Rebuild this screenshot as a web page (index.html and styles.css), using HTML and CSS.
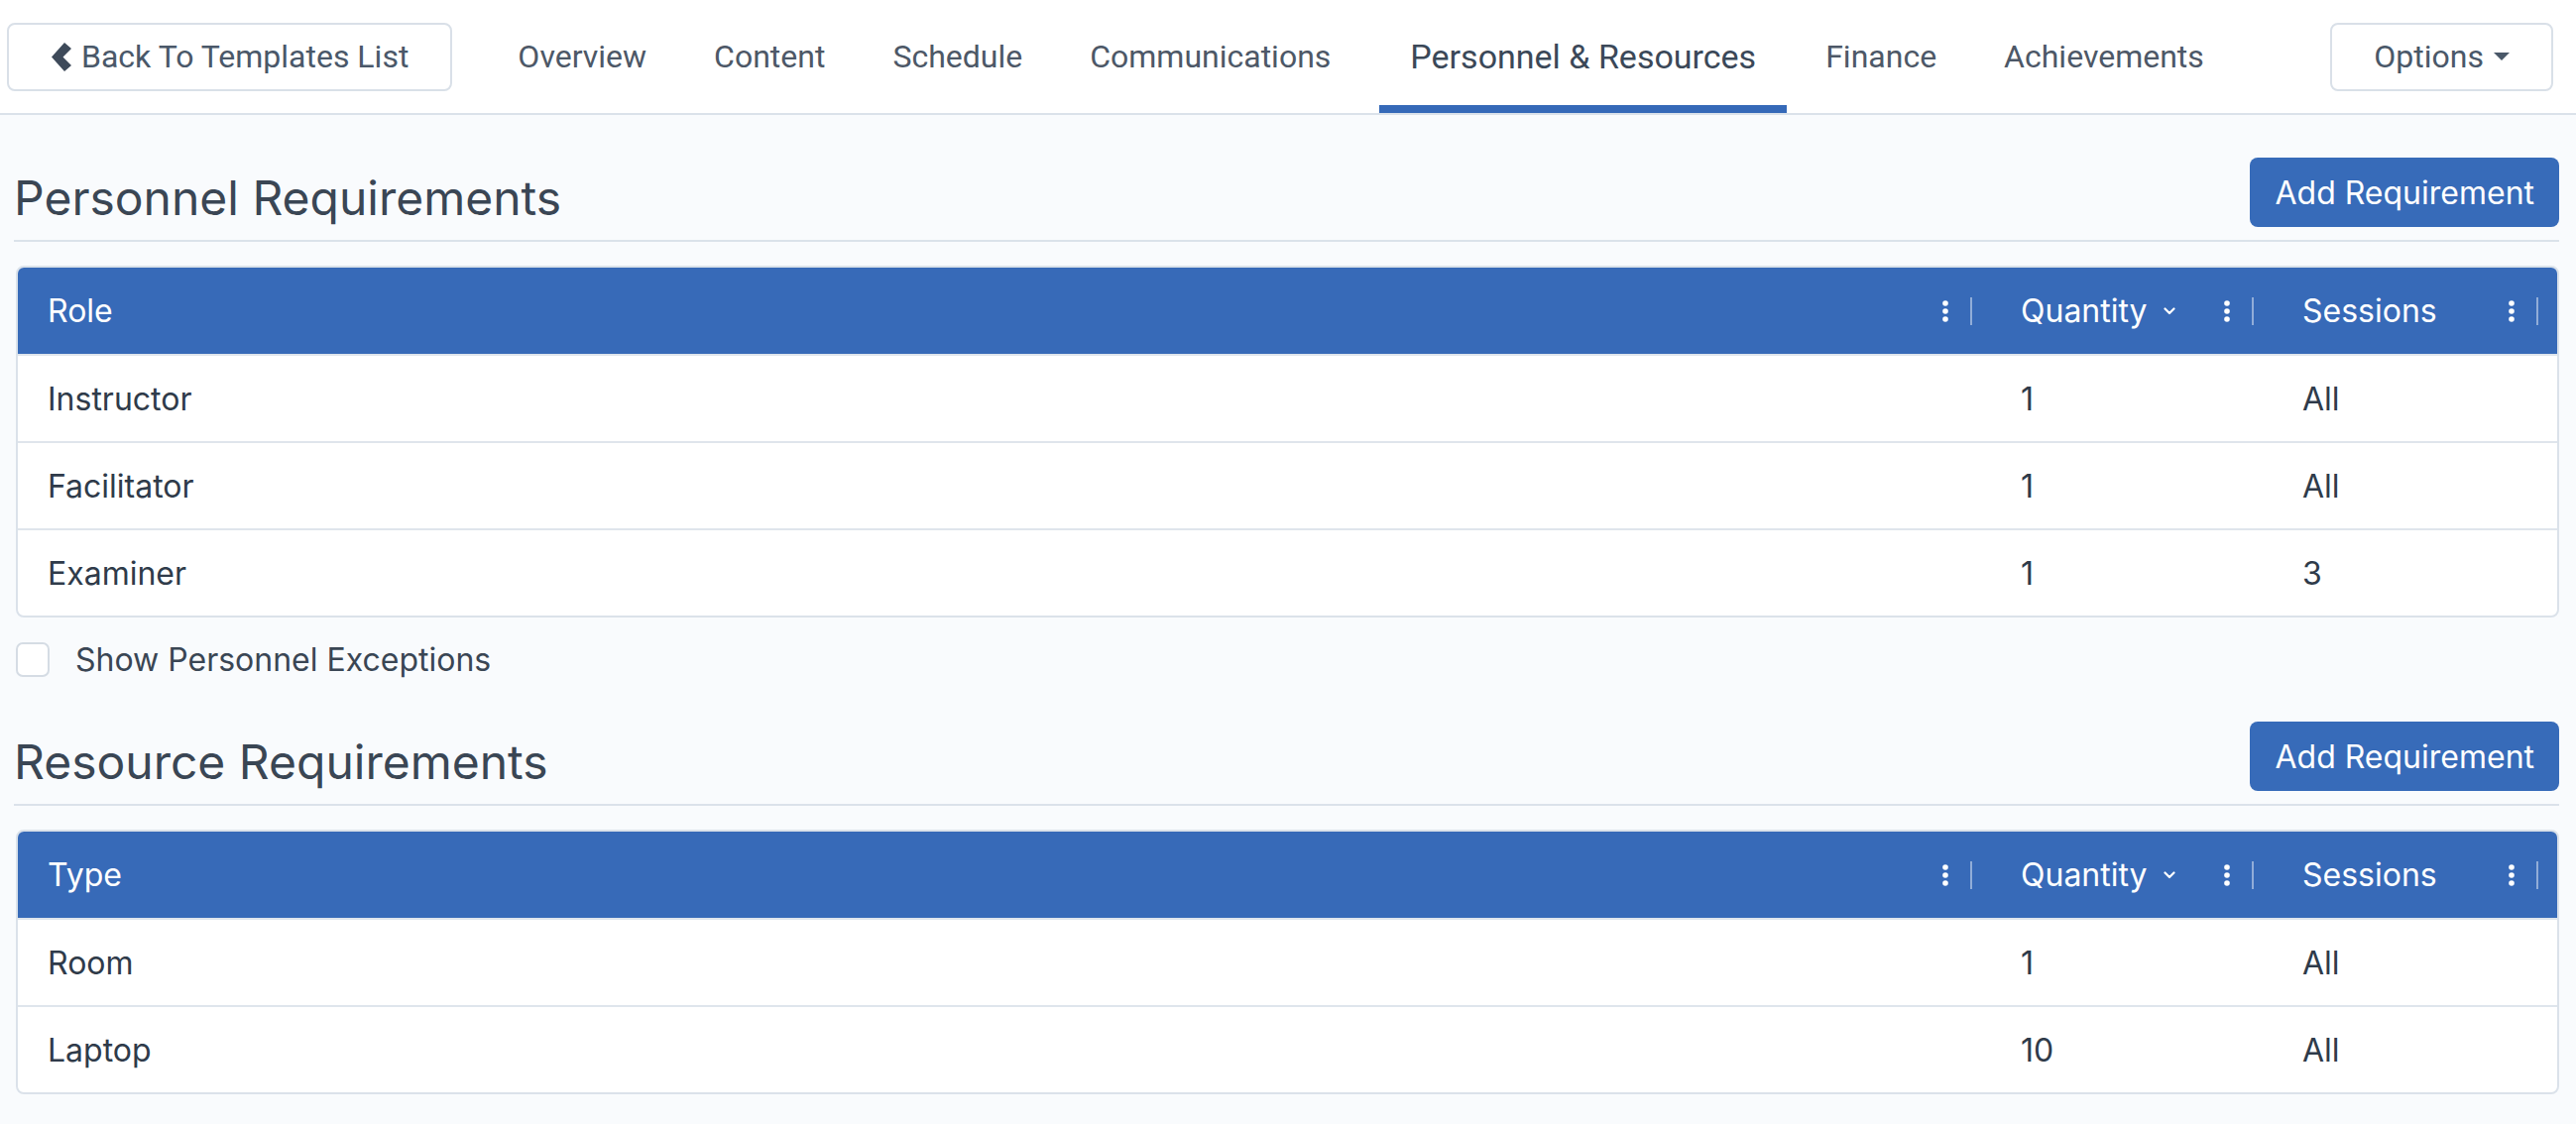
FILE: index.html
```html
<!DOCTYPE html>
<html lang="en">
<head>
<meta charset="utf-8">
<title>Personnel &amp; Resources</title>
<link rel="stylesheet" href="styles.css">
</head>
<body>
<nav class="topnav">
  <button class="nav-btn back-btn">
    <svg class="chev-left" viewBox="0 0 20 29" width="20" height="29"><path d="M13 0 L20 6 L11.5 14.5 L20 23 L13 29 L0 14.5 Z" fill="currentColor"/></svg>
    <span>Back To Templates List</span>
  </button>
  <ul class="tabs">
    <li class="tab">Overview</li>
    <li class="tab">Content</li>
    <li class="tab">Schedule</li>
    <li class="tab">Communications</li>
    <li class="tab active">Personnel &amp; Resources</li>
    <li class="tab">Finance</li>
    <li class="tab">Achievements</li>
  </ul>
  <button class="nav-btn options-btn">
    <span>Options</span>
    <svg class="caret" viewBox="0 0 16 8" width="16" height="8"><path d="M0 0 H16 L8 8 Z" fill="currentColor"/></svg>
  </button>
</nav>

<main class="content">
  <section class="req-section">
    <div class="section-head">
      <h2 class="section-title">Personnel Requirements</h2>
      <button class="btn-primary">Add Requirement</button>
    </div>
    <div class="grid-table">
      <div class="grid-row head">
        <div class="th"><span class="th-label">Role</span><span class="th-fill"></span><svg class="dots" viewBox="0 0 6 22" width="6" height="22"><circle cx="3" cy="3" r="2.8"/><circle cx="3" cy="11" r="2.8"/><circle cx="3" cy="19" r="2.8"/></svg><i class="th-sep"></i></div>
        <div class="th"><span class="th-label">Quantity</span><svg class="sort" viewBox="0 0 12 8" width="12" height="8"><path d="M1.5 1.5 L6 6 L10.5 1.5" fill="none" stroke="currentColor" stroke-width="2.2" stroke-linecap="round" stroke-linejoin="round"/></svg><span class="th-fill"></span><svg class="dots" viewBox="0 0 6 22" width="6" height="22"><circle cx="3" cy="3" r="2.8"/><circle cx="3" cy="11" r="2.8"/><circle cx="3" cy="19" r="2.8"/></svg><i class="th-sep"></i></div>
        <div class="th"><span class="th-label">Sessions</span><span class="th-fill"></span><svg class="dots" viewBox="0 0 6 22" width="6" height="22"><circle cx="3" cy="3" r="2.8"/><circle cx="3" cy="11" r="2.8"/><circle cx="3" cy="19" r="2.8"/></svg><i class="th-sep"></i></div>
      </div>
      <div class="grid-row"><div class="td">Instructor</div><div class="td">1</div><div class="td">All</div></div>
      <div class="grid-row"><div class="td">Facilitator</div><div class="td">1</div><div class="td">All</div></div>
      <div class="grid-row"><div class="td">Examiner</div><div class="td">1</div><div class="td">3</div></div>
    </div>
    <label class="check-row">
      <span class="checkbox"></span>
      <span>Show Personnel Exceptions</span>
    </label>
  </section>

  <section class="req-section">
    <div class="section-head">
      <h2 class="section-title">Resource Requirements</h2>
      <button class="btn-primary">Add Requirement</button>
    </div>
    <div class="grid-table">
      <div class="grid-row head">
        <div class="th"><span class="th-label">Type</span><span class="th-fill"></span><svg class="dots" viewBox="0 0 6 22" width="6" height="22"><circle cx="3" cy="3" r="2.8"/><circle cx="3" cy="11" r="2.8"/><circle cx="3" cy="19" r="2.8"/></svg><i class="th-sep"></i></div>
        <div class="th"><span class="th-label">Quantity</span><svg class="sort" viewBox="0 0 12 8" width="12" height="8"><path d="M1.5 1.5 L6 6 L10.5 1.5" fill="none" stroke="currentColor" stroke-width="2.2" stroke-linecap="round" stroke-linejoin="round"/></svg><span class="th-fill"></span><svg class="dots" viewBox="0 0 6 22" width="6" height="22"><circle cx="3" cy="3" r="2.8"/><circle cx="3" cy="11" r="2.8"/><circle cx="3" cy="19" r="2.8"/></svg><i class="th-sep"></i></div>
        <div class="th"><span class="th-label">Sessions</span><span class="th-fill"></span><svg class="dots" viewBox="0 0 6 22" width="6" height="22"><circle cx="3" cy="3" r="2.8"/><circle cx="3" cy="11" r="2.8"/><circle cx="3" cy="19" r="2.8"/></svg><i class="th-sep"></i></div>
      </div>
      <div class="grid-row"><div class="td">Room</div><div class="td">1</div><div class="td">All</div></div>
      <div class="grid-row"><div class="td">Laptop</div><div class="td">10</div><div class="td">All</div></div>
    </div>
  </section>
</main>
</body>
</html>
```

FILE: styles.css
```css
* { box-sizing: border-box; }

html, body {
  margin: 0;
  padding: 0;
}

body {
  background: #f9fbfd;
  font-family: "Inter", "Noto Sans", sans-serif;
  color: #2f3b4a;
}

/* ---------- top navigation ---------- */
.topnav {
  display: flex;
  align-items: center;
  height: 116px;
  padding: 0 23px 0 7px;
  background: #ffffff;
  border-bottom: 2px solid #dbe2ea;
}

.nav-btn {
  display: flex;
  align-items: center;
  height: 69px;
  background: #ffffff;
  border: 2px solid #d9e0e8;
  border-radius: 8px;
  font-family: "Roboto", "Liberation Sans", sans-serif;
  font-size: 32px;
  color: #4a5869;
  cursor: pointer;
}

.back-btn {
  gap: 10px;
  padding: 0 42px 0 43px;
}

.chev-left { color: #3e4a5a; }

.options-btn {
  gap: 10px;
  margin-left: auto;
  padding: 0 42px 0 42px;
}

.caret { color: #4a5869; }

.tabs {
  display: flex;
  align-self: stretch;
  margin: 0 0 0 32px;
  padding: 0;
  list-style: none;
}

.tab {
  display: flex;
  align-items: center;
  margin: 0 5px;
  padding: 8px 29px 0;
  border-bottom: 8px solid transparent;
  font-family: "Roboto", "Liberation Sans", sans-serif;
  font-size: 32px;
  color: #4d5867;
  cursor: pointer;
}

.tab.active {
  margin-left: 15px;
  padding: 8px 31px 0;
  font-size: 34px;
  color: #3b4858;
  border-bottom-color: #3569b8;
}

/* ---------- page content ---------- */
.content {
  padding: 43px 17px 0 14px;
}

.section-head {
  display: flex;
  align-items: flex-end;
  justify-content: space-between;
  padding-bottom: 13px;
  border-bottom: 2px solid #dbe2ea;
}

.section-title {
  margin: 0 0 1px 0;
  font-size: 48px;
  line-height: 56px;
  font-weight: 400;
  color: #3a4654;
}

.btn-primary {
  height: 70px;
  padding: 0 25px;
  background: #376bb9;
  border: 0;
  border-radius: 8px;
  color: #ffffff;
  font-family: "Inter", "Noto Sans", sans-serif;
  font-size: 32px;
  cursor: pointer;
}

/* ---------- data grid ---------- */
.grid-table {
  margin: 24px 0 0 2px;
  background: #ffffff;
  border: 2px solid #dbe2ea;
  border-radius: 8px;
  overflow: hidden;
}

.grid-row {
  display: grid;
  grid-template-columns: 1fr 284px 287px;
  height: 88px;
  border-top: 2px solid #dfe5ec;
}

.grid-row.head {
  height: 87px;
  border-top: 0;
  background: #376ab8;
  color: #ffffff;
}

.th {
  display: flex;
  align-items: center;
  padding: 0 19px 0 30px;
  font-size: 32px;
}

.th-fill { flex: 1; }

.sort {
  margin-left: 16px;
  color: #ffffff;
}

.dots {
  fill: #ffffff;
}

.th-sep {
  width: 2px;
  height: 28px;
  margin-left: 22px;
  background: rgba(255, 255, 255, 0.45);
}

.td {
  display: flex;
  align-items: center;
  padding: 0 30px;
  font-size: 32px;
  color: #2f3b4a;
}

/* ---------- checkbox ---------- */
.check-row {
  display: flex;
  align-items: center;
  gap: 26px;
  height: 35px;
  margin: 25px 0 45px 2px;
  font-size: 32px;
  color: #3a4654;
}

.checkbox {
  width: 34px;
  height: 35px;
  background: #ffffff;
  border: 2px solid #d5dce4;
  border-radius: 7px;
}
```
